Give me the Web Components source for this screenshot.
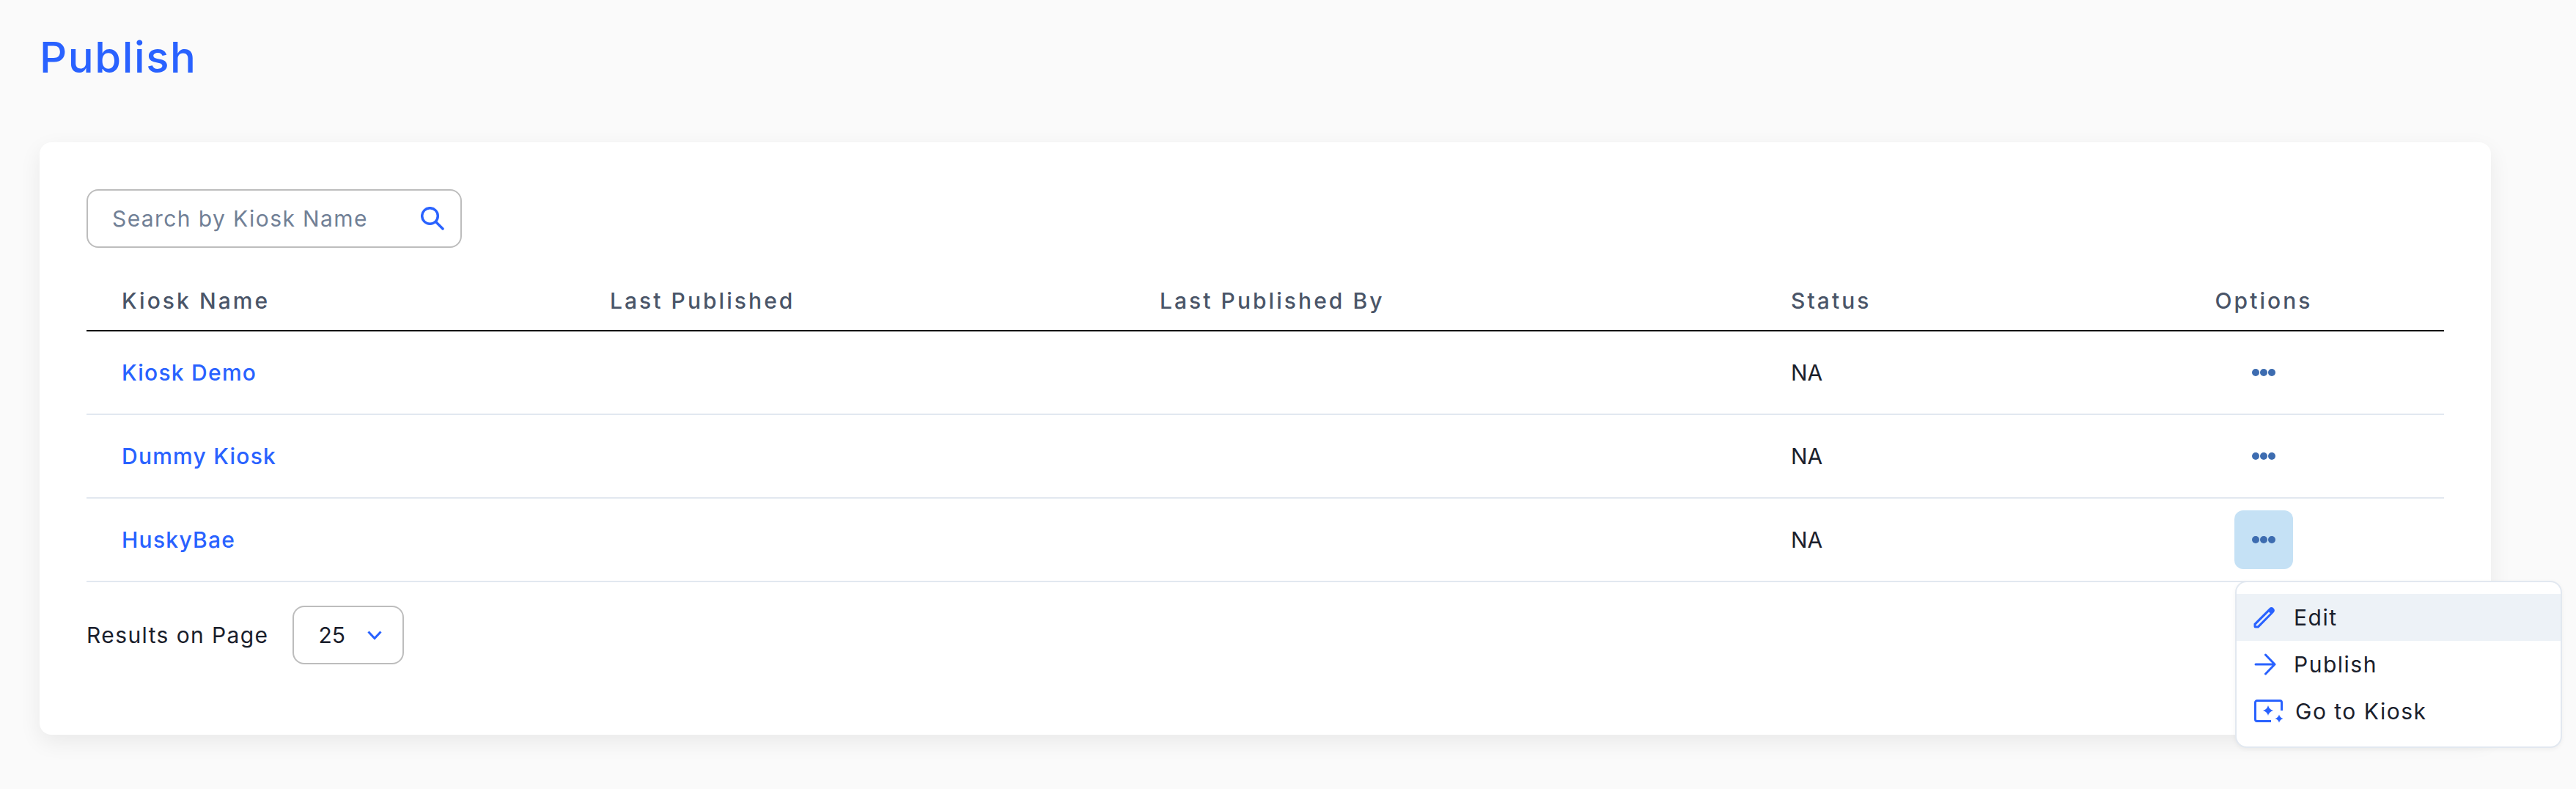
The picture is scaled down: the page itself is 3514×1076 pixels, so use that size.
<!DOCTYPE html>
<html>
<head>
<meta charset="utf-8">
<title>Publish</title>
<style>
    html, body { margin: 0; padding: 0; background: #fafafa; }
    body { font-family: "Inter", "Liberation Sans", sans-serif; color: #1a202c; }
</style>
</head>
<body>
<publish-page>
    <kiosk-card>
        <search-box placeholder="Search by Kiosk Name"></search-box>
        <kiosk-row head name="Kiosk Name" published="Last Published" by="Last Published By" status="Status"></kiosk-row>
        <kiosk-row name="Kiosk Demo" status="NA"></kiosk-row>
        <kiosk-row name="Dummy Kiosk" status="NA"></kiosk-row>
        <kiosk-row name="HuskyBae" status="NA" open>
            <options-menu slot="menu">
                <menu-item active>
                    <svg slot="icon" style="margin-left:-1px" width="30" height="30" viewBox="0 0 30 30" fill="#2962ff" fill-rule="evenodd"><path d="M.5 23.500L21.500 2.500q3-2.800 6 0 2.800 3 0 6L7 29.500H3q-2.500 0-2.500-2.500zM3.500 25v1.500H5.500L22.800 9.300 21 7.500z"/></svg>
                    Edit
                </menu-item>
                <menu-item>
                    <svg slot="icon" width="30" height="30" viewBox="0 0 30 30" fill="none" stroke="#2962ff" stroke-width="3" stroke-linecap="round" stroke-linejoin="round"><path d="M2 15h26M15.500 2L28 15 15.500 28"/></svg>
                    Publish
                </menu-item>
                <menu-item style="--icon-width: 56px">
                    <svg slot="icon" width="40" height="32" viewBox="0 0 40 32" fill="none"><path d="M37.500 15V4A2.500 2.500 0 0 0 35 1.500H4A2.500 2.500 0 0 0 1.500 4v23A2.500 2.500 0 0 0 4 29.500h19" stroke="#2962ff" stroke-width="3"/><path d="M19 8q1.500 5.500 7 7-5.500 1.500-7 7-1.500-5.500-7-7 5.500-1.500 7-7zM34 20.500q1.200 4.300 5.500 5.500-4.300 1.200-5.500 5.500-1.200-4.300-5.500-5.500 4.300-1.200 5.500-5.500z" fill="#2962ff"/></svg>
                    Go to Kiosk
                </menu-item>
            </options-menu>
        </kiosk-row>
        <page-size label="Results on Page" value="25"></page-size>
    </kiosk-card>
</publish-page>

<script>
"use strict";

// page shell with the title.
class PublishPage extends HTMLElement {
    constructor() {
        super();
        this.attachShadow({ mode: 'open' });
        this.shadowRoot.innerHTML = `
<style>
    :host { display: block; padding: 42px 0 0 54px; height: 1076px; box-sizing: border-box; overflow: hidden; }
    h1 { margin: 0 0 80px; font-size: 58px; line-height: 72px; font-weight: 500; letter-spacing: 1.6px; color: #2962ff; }
</style>
<h1>Publish</h1>
<slot></slot>`;
    }
}
customElements.define('publish-page', PublishPage);

class KioskCard extends HTMLElement {
    constructor() {
        super();
        this.attachShadow({ mode: 'open' });
        this.shadowRoot.innerHTML = `
<style>
    :host {
        display: block;
        box-sizing: border-box;
        width: 3344px;
        height: 808px;
        padding: 64px;
        background: #fff;
        border-radius: 16px;
        box-shadow: 0 10px 30px rgba(0, 0, 0, .07);
    }
</style>
<slot></slot>`;
    }
}
customElements.define('kiosk-card', KioskCard);

class SearchBox extends HTMLElement {
    constructor() {
        super();
        this.attachShadow({ mode: 'open' });
        this.shadowRoot.innerHTML = `
<style>
    :host {
        display: flex;
        align-items: center;
        justify-content: space-between;
        box-sizing: border-box;
        width: 512px;
        height: 80px;
        padding: 0 22px 0 33px;
        border: 2px solid #bdbdbd;
        border-radius: 16px;
        font-size: 30px;
        letter-spacing: 1.4px;
        color: #718096;
    }
    svg { display: block; }
</style>
<span>${this.getAttribute('placeholder')}</span>
<svg width="32" height="32" viewBox="0 0 32 32" fill="none" stroke="#2962ff" stroke-width="3.500" stroke-linecap="round"><circle cx="12.500" cy="12.500" r="10.800"/><path d="M21 21l9 9"/></svg>`;
    }
}
customElements.define('search-box', SearchBox);

// one table row, also used for the head row.
class KioskRow extends HTMLElement {
    constructor() {
        super();
        this.attachShadow({ mode: 'open' });
        const head = this.hasAttribute('head');
        const attr = name => this.getAttribute(name) || '';
        const dots = `<svg width="32" height="10" viewBox="0 0 32 10" fill="#3d6cb0"><circle cx="5" cy="5" r="5"/><circle cx="16" cy="5" r="5"/><circle cx="27" cy="5" r="5"/></svg>`;
        this.shadowRoot.innerHTML = `
<style>
    :host {
        display: grid;
        grid-template-columns: 666px 750px 861px 447px 492px;
        align-items: center;
        box-sizing: border-box;
        height: 114px;
        border-bottom: 2px solid #e2e8f0;
        font-size: 30px;
    }
    :host([head]) {
        height: 84px;
        margin-top: 30px;
        padding-top: 2px;
        border-bottom-color: #000;
        color: #4a5568;
        font-weight: 500;
        letter-spacing: 3.05px;
    }
    .cell { padding-left: 48px; }
    .name { color: #2962ff; font-weight: 500; letter-spacing: 1.25px; }
    :host([head]) .name { color: inherit; letter-spacing: inherit; }
    .options { display: flex; justify-content: center; }
    .wrap { position: relative; }
    button {
        display: flex;
        align-items: center;
        justify-content: center;
        width: 80px;
        height: 80px;
        padding: 0;
        border: 0;
        border-radius: 12px;
        background: transparent;
    }
    :host([open]) button { background: #c5e1f5; }
</style>
<div class="cell name">${attr('name')}</div>
<div class="cell">${attr('published')}</div>
<div class="cell">${attr('by')}</div>
<div class="cell">${attr('status')}</div>
<div class="options">${head ? 'Options' : `<div class="wrap"><button>${dots}</button><slot name="menu"></slot></div>`}</div>`;
    }
}
customElements.define('kiosk-row', KioskRow);

class OptionsMenu extends HTMLElement {
    constructor() {
        super();
        this.attachShadow({ mode: 'open' });
        this.shadowRoot.innerHTML = `
<style>
    :host {
        position: absolute;
        top: 96px;
        left: 1px;
        display: block;
        box-sizing: border-box;
        width: 446px;
        padding: 16px 0;
        background: #fff;
        border: 2px solid #e2e8f0;
        border-radius: 16px;
        box-shadow: 0 2px 6px rgba(0, 0, 0, .05);
    }
</style>
<slot></slot>`;
    }
}
customElements.define('options-menu', OptionsMenu);

class MenuItem extends HTMLElement {
    constructor() {
        super();
        this.attachShadow({ mode: 'open' });
        this.shadowRoot.innerHTML = `
<style>
    :host {
        display: flex;
        align-items: center;
        height: 64px;
        padding-left: 24px;
        font-size: 30px;
        letter-spacing: 1.5px;
        color: #1a202c;
    }
    :host([active]) { background: #edf2f7; }
    .icon { display: flex; width: var(--icon-width, 54px); }
</style>
<span class="icon"><slot name="icon"></slot></span>
<slot></slot>`;
    }
}
customElements.define('menu-item', MenuItem);

class PageSize extends HTMLElement {
    constructor() {
        super();
        this.attachShadow({ mode: 'open' });
        this.shadowRoot.innerHTML = `
<style>
    :host {
        display: flex;
        align-items: center;
        gap: 33px;
        margin-top: 32px;
        font-size: 30px;
    }
    .label { letter-spacing: 1.4px; }
    .select {
        display: flex;
        align-items: center;
        justify-content: space-between;
        box-sizing: border-box;
        width: 152px;
        height: 80px;
        padding: 0 28px 0 33px;
        border: 2px solid #bdbdbd;
        border-radius: 16px;
    }
</style>
<span class="label">${this.getAttribute('label')}</span>
<div class="select">
    <span>${this.getAttribute('value')}</span>
    <svg width="20" height="13" viewBox="0 0 20 13" fill="none" stroke="#2962ff" stroke-width="3"><path d="M1.500 1.500L10 10.500l8.500-9"/></svg>
</div>`;
    }
}
customElements.define('page-size', PageSize);
</script>
</body>
</html>
